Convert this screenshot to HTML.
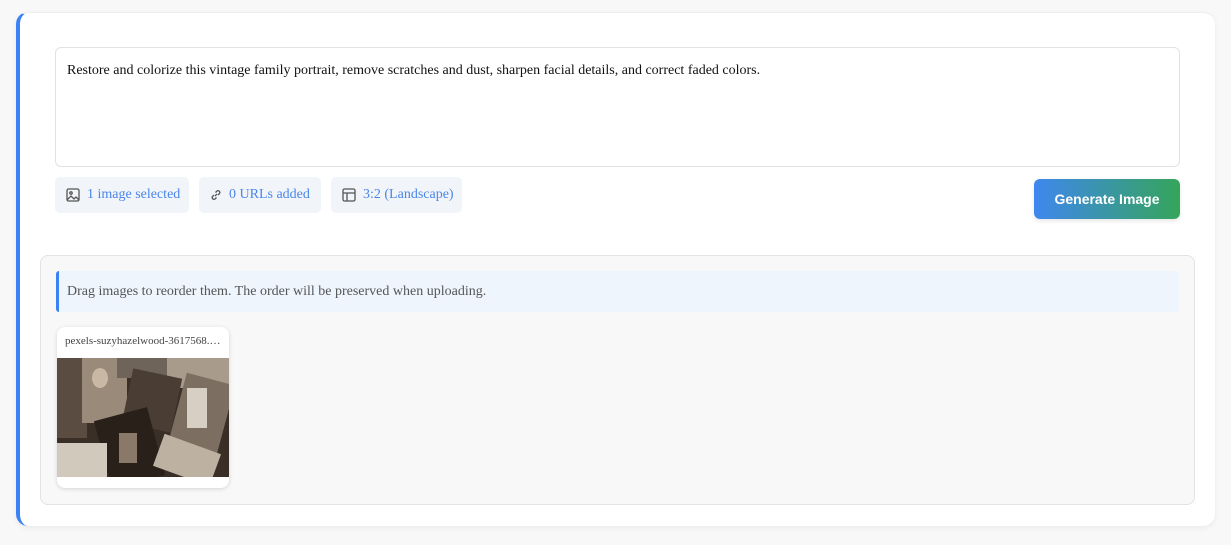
<!DOCTYPE html>
<html><head><style>
body{margin:0;width:1231px;height:545px;background:#f8f8f8;font-family:"Liberation Serif",serif;position:relative;overflow:hidden}
.card{position:absolute;left:16px;top:12px;width:1199px;height:514px;background:#fff;border-radius:12px;border-left:4px solid #3b82f6;box-sizing:border-box;box-shadow:0 2px 6px rgba(0,0,0,.06);border-top:1px solid #eee}
.ta{position:absolute;left:55px;top:47px;width:1125px;height:120px;border:1px solid #e2e2e2;border-radius:6px;box-sizing:border-box;padding:15px 11px;font-size:14px;color:#111;background:#fff}
.chip{position:absolute;top:177px;height:36px;background:#f1f4f9;border-radius:5px;font-size:14px;color:#4a86e8;display:flex;align-items:center;box-sizing:border-box;padding-left:11px}
.chip svg{margin-right:7px}
.btn{position:absolute;left:1034px;top:179px;width:146px;height:40px;border-radius:6px;background:linear-gradient(90deg,#3f87ee,#35a55a);color:#fff;font-family:"Liberation Sans",sans-serif;font-weight:bold;font-size:14px;display:flex;align-items:center;justify-content:center;box-shadow:0 2px 4px rgba(0,0,0,.1)}
.panel{position:absolute;left:40px;top:255px;width:1155px;height:250px;background:#f8f8f8;border:1px solid #e3e3e3;border-radius:8px;box-sizing:border-box}
.info{position:absolute;left:56px;top:271px;width:1123px;height:41px;background:#eef5fd;border-left:3px solid #3b82f6;border-radius:3px;box-sizing:border-box;padding-left:8px;line-height:41px;font-size:14px;color:#555}
.thumb{position:absolute;left:57px;top:327px;width:172px;height:161px;background:#fff;border-radius:8px;box-shadow:0 1px 4px rgba(0,0,0,.15);overflow:hidden}
.thumb .n{font-size:11px;color:#444;padding:8px 0 0 8px;height:23px;white-space:nowrap}
.img{position:absolute;left:0;top:31px;width:172px;height:119px;background:#3a2f26;overflow:hidden}
.img div{position:absolute}
</style></head><body>
<div class="card"></div>
<div class="ta">Restore and colorize this vintage family portrait, remove scratches and dust, sharpen facial details, and correct faded colors.</div>
<div class="chip" style="left:55px;width:134px"><svg width="14" height="14" viewBox="0 0 14 14" fill="none" stroke="#555" stroke-width="1.3"><rect x="1" y="1" width="12" height="12" rx="1.5"/><circle cx="5" cy="5" r="1.2"/><path d="M1 12l4-4 3 3 2-2 3 3"/></svg>1 image selected</div>
<div class="chip" style="left:199px;width:122px"><svg width="12" height="12" viewBox="0 0 12 12" fill="none" stroke="#555" stroke-width="1.3"><path d="M5 7l2-2M4 6L2.5 7.5a1.8 1.8 0 002.5 2.5L6.5 8.5M8 6l1.5-1.5A1.8 1.8 0 007 2L5.5 3.5"/></svg>0 URLs added</div>
<div class="chip" style="left:331px;width:131px"><svg width="14" height="14" viewBox="0 0 14 14" fill="none" stroke="#555" stroke-width="1.3"><rect x="1" y="1" width="12" height="12" rx="1.5"/><path d="M1 5h12M5 5v8"/></svg>3:2 (Landscape)</div>
<div class="btn">Generate Image</div>
<div class="panel"></div>
<div class="info">Drag images to reorder them. The order will be preserved when uploading.</div>
<div class="thumb"><div class="n">pexels-suzyhazelwood-3617568.…</div><div class="img">
<div style="left:0;top:0;width:30px;height:80px;background:#5a4c40"></div>
<div style="left:25px;top:0;width:45px;height:65px;background:#9a8a7a"></div>
<div style="left:60px;top:0;width:60px;height:20px;background:#6f645a"></div>
<div style="left:110px;top:0;width:62px;height:30px;background:#a89b8c"></div>
<div style="left:70px;top:15px;width:50px;height:55px;background:#4a3e34;transform:rotate(12deg)"></div>
<div style="left:120px;top:20px;width:50px;height:70px;background:#7c6e60;transform:rotate(15deg)"></div>
<div style="left:130px;top:30px;width:20px;height:40px;background:#d8cfc4"></div>
<div style="left:45px;top:55px;width:55px;height:70px;background:#2a201a;transform:rotate(-15deg)"></div>
<div style="left:62px;top:75px;width:18px;height:30px;background:#8a7868"></div>
<div style="left:0;top:85px;width:50px;height:34px;background:#d2c9bd"></div>
<div style="left:100px;top:85px;width:60px;height:34px;background:#bdb1a2;transform:rotate(20deg)"></div>
<div style="left:35px;top:10px;width:16px;height:20px;background:#c8b8a4;border-radius:50%"></div>
</div></div>
</body></html>
